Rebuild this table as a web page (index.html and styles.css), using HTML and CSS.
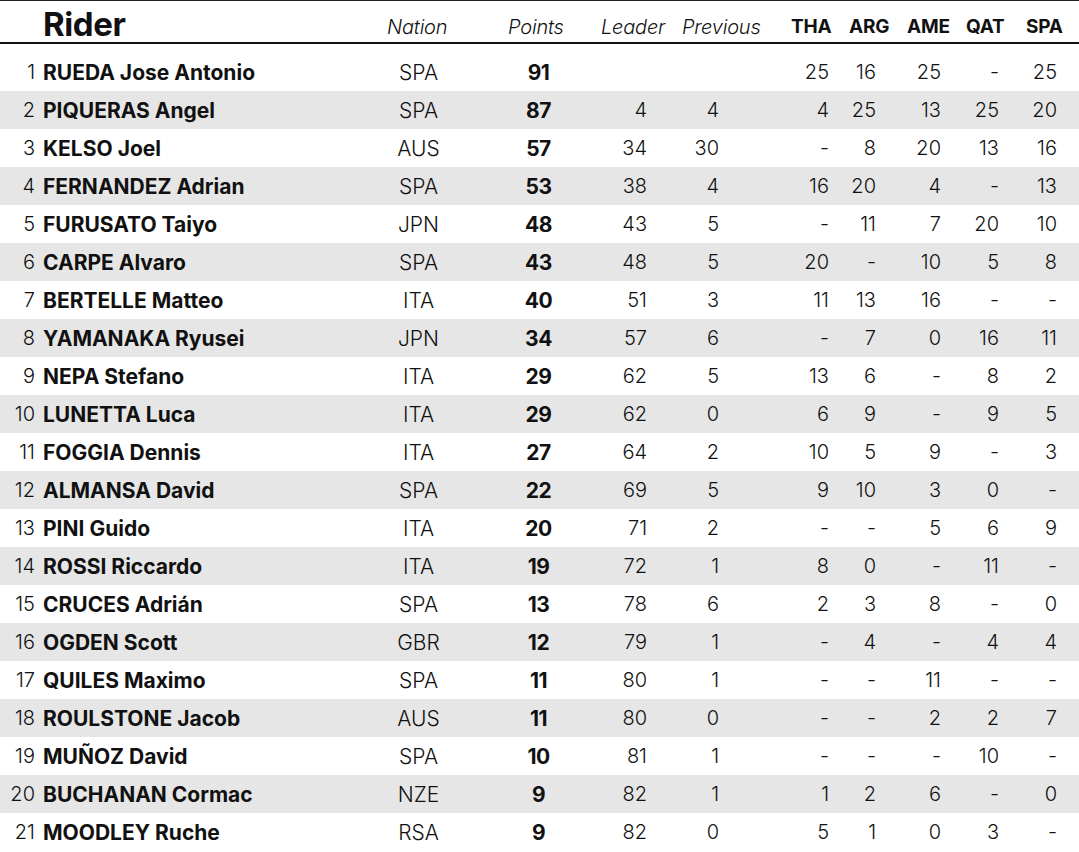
FILE: index.html
```html
<!DOCTYPE html>
<html>
<head>
<meta charset="utf-8">
<link rel="stylesheet" href="styles.css">
</head>
<body>
<div class="standings">
  <div class="head">
    <div class="h-rider">Rider</div>
    <div class="h-lab h-nation">Nation</div>
    <div class="h-lab h-points">Points</div>
    <div class="h-lab h-leader">Leader</div>
    <div class="h-lab h-prev">Previous</div>
    <div class="h-race h-tha">THA</div>
    <div class="h-race h-arg">ARG</div>
    <div class="h-race h-ame">AME</div>
    <div class="h-race h-qat">QAT</div>
    <div class="h-race h-spa">SPA</div>
  </div>
  <div class="spacer"></div>
  <div class="rows">
    <div class="row"><span class="pos">1</span><span class="name">RUEDA Jose Antonio</span><span class="nat">SPA</span><span class="pts">91</span><span class="num"></span><span class="num"></span><span class="num">25</span><span class="num">16</span><span class="num">25</span><span class="num">-</span><span class="num">25</span></div>
    <div class="row"><span class="pos">2</span><span class="name">PIQUERAS Angel</span><span class="nat">SPA</span><span class="pts">87</span><span class="num">4</span><span class="num">4</span><span class="num">4</span><span class="num">25</span><span class="num">13</span><span class="num">25</span><span class="num">20</span></div>
    <div class="row"><span class="pos">3</span><span class="name">KELSO Joel</span><span class="nat">AUS</span><span class="pts">57</span><span class="num">34</span><span class="num">30</span><span class="num">-</span><span class="num">8</span><span class="num">20</span><span class="num">13</span><span class="num">16</span></div>
    <div class="row"><span class="pos">4</span><span class="name">FERNANDEZ Adrian</span><span class="nat">SPA</span><span class="pts">53</span><span class="num">38</span><span class="num">4</span><span class="num">16</span><span class="num">20</span><span class="num">4</span><span class="num">-</span><span class="num">13</span></div>
    <div class="row"><span class="pos">5</span><span class="name">FURUSATO Taiyo</span><span class="nat">JPN</span><span class="pts">48</span><span class="num">43</span><span class="num">5</span><span class="num">-</span><span class="num">11</span><span class="num">7</span><span class="num">20</span><span class="num">10</span></div>
    <div class="row"><span class="pos">6</span><span class="name">CARPE Alvaro</span><span class="nat">SPA</span><span class="pts">43</span><span class="num">48</span><span class="num">5</span><span class="num">20</span><span class="num">-</span><span class="num">10</span><span class="num">5</span><span class="num">8</span></div>
    <div class="row"><span class="pos">7</span><span class="name">BERTELLE Matteo</span><span class="nat">ITA</span><span class="pts">40</span><span class="num">51</span><span class="num">3</span><span class="num">11</span><span class="num">13</span><span class="num">16</span><span class="num">-</span><span class="num">-</span></div>
    <div class="row"><span class="pos">8</span><span class="name">YAMANAKA Ryusei</span><span class="nat">JPN</span><span class="pts">34</span><span class="num">57</span><span class="num">6</span><span class="num">-</span><span class="num">7</span><span class="num">0</span><span class="num">16</span><span class="num">11</span></div>
    <div class="row"><span class="pos">9</span><span class="name">NEPA Stefano</span><span class="nat">ITA</span><span class="pts">29</span><span class="num">62</span><span class="num">5</span><span class="num">13</span><span class="num">6</span><span class="num">-</span><span class="num">8</span><span class="num">2</span></div>
    <div class="row"><span class="pos">10</span><span class="name">LUNETTA Luca</span><span class="nat">ITA</span><span class="pts">29</span><span class="num">62</span><span class="num">0</span><span class="num">6</span><span class="num">9</span><span class="num">-</span><span class="num">9</span><span class="num">5</span></div>
    <div class="row"><span class="pos">11</span><span class="name">FOGGIA Dennis</span><span class="nat">ITA</span><span class="pts">27</span><span class="num">64</span><span class="num">2</span><span class="num">10</span><span class="num">5</span><span class="num">9</span><span class="num">-</span><span class="num">3</span></div>
    <div class="row"><span class="pos">12</span><span class="name">ALMANSA David</span><span class="nat">SPA</span><span class="pts">22</span><span class="num">69</span><span class="num">5</span><span class="num">9</span><span class="num">10</span><span class="num">3</span><span class="num">0</span><span class="num">-</span></div>
    <div class="row"><span class="pos">13</span><span class="name">PINI Guido</span><span class="nat">ITA</span><span class="pts">20</span><span class="num">71</span><span class="num">2</span><span class="num">-</span><span class="num">-</span><span class="num">5</span><span class="num">6</span><span class="num">9</span></div>
    <div class="row"><span class="pos">14</span><span class="name">ROSSI Riccardo</span><span class="nat">ITA</span><span class="pts">19</span><span class="num">72</span><span class="num">1</span><span class="num">8</span><span class="num">0</span><span class="num">-</span><span class="num">11</span><span class="num">-</span></div>
    <div class="row"><span class="pos">15</span><span class="name">CRUCES Adrián</span><span class="nat">SPA</span><span class="pts">13</span><span class="num">78</span><span class="num">6</span><span class="num">2</span><span class="num">3</span><span class="num">8</span><span class="num">-</span><span class="num">0</span></div>
    <div class="row"><span class="pos">16</span><span class="name">OGDEN Scott</span><span class="nat">GBR</span><span class="pts">12</span><span class="num">79</span><span class="num">1</span><span class="num">-</span><span class="num">4</span><span class="num">-</span><span class="num">4</span><span class="num">4</span></div>
    <div class="row"><span class="pos">17</span><span class="name">QUILES Maximo</span><span class="nat">SPA</span><span class="pts">11</span><span class="num">80</span><span class="num">1</span><span class="num">-</span><span class="num">-</span><span class="num">11</span><span class="num">-</span><span class="num">-</span></div>
    <div class="row"><span class="pos">18</span><span class="name">ROULSTONE Jacob</span><span class="nat">AUS</span><span class="pts">11</span><span class="num">80</span><span class="num">0</span><span class="num">-</span><span class="num">-</span><span class="num">2</span><span class="num">2</span><span class="num">7</span></div>
    <div class="row"><span class="pos">19</span><span class="name">MUÑOZ David</span><span class="nat">SPA</span><span class="pts">10</span><span class="num">81</span><span class="num">1</span><span class="num">-</span><span class="num">-</span><span class="num">-</span><span class="num">10</span><span class="num">-</span></div>
    <div class="row"><span class="pos">20</span><span class="name">BUCHANAN Cormac</span><span class="nat">NZE</span><span class="pts">9</span><span class="num">82</span><span class="num">1</span><span class="num">1</span><span class="num">2</span><span class="num">6</span><span class="num">-</span><span class="num">0</span></div>
    <div class="row"><span class="pos">21</span><span class="name">MOODLEY Ruche</span><span class="nat">RSA</span><span class="pts">9</span><span class="num">82</span><span class="num">0</span><span class="num">5</span><span class="num">1</span><span class="num">0</span><span class="num">3</span><span class="num">-</span></div>
  </div>
</div>
</body>
</html>
```
FILE: styles.css
```css
* { box-sizing: border-box; }
html, body { margin: 0; padding: 0; background: #fff; }
body {
  font-family: "Inter", "Lato", "Liberation Sans", sans-serif;
  color: #111;
  width: 1079px;
  height: 852px;
  overflow: hidden;
}
.standings {
  border-top: 1px solid #222;
}
.head {
  display: grid;
  grid-template-columns: 387px 121px 93px 81px 109px 58px 58px 59px 60px 53px;
  height: 43px;
  align-items: end;
  padding-bottom: 3px;
  border-bottom: 2px solid #111;
  white-space: nowrap;
}
.h-rider {
  padding-left: 43px;
  font-size: 33px;
  font-weight: 700;
  letter-spacing: -0.4px;
  line-height: 36px;
  margin-bottom: -3px;
}
.h-lab {
  font-size: 20px;
  font-style: italic;
  font-weight: 300;
  line-height: 24px;
  letter-spacing: -0.2px;
}
.h-race {
  font-size: 19px;
  font-weight: 700;
  line-height: 24px;
  letter-spacing: -0.2px;
}
.spacer { height: 9px; }
.row {
  display: grid;
  grid-template-columns: 36px 338px 89px 151px 34px 72px 110px 47px 65px 58px 58px;
  height: 38px;
  align-items: center;
  font-size: 20px;
  white-space: nowrap;
}
.row:nth-child(even) { background: #e6e6e6; }
.pos {
  text-align: right;
  padding-right: 1px;
  font-weight: 300;
}
.name {
  padding-left: 7px;
  font-weight: 700;
  font-size: 21px;
  letter-spacing: 0;
}
.nat {
  text-align: center;
  font-weight: 300;
  font-size: 21px;
}
.pts {
  text-align: center;
  font-weight: 700;
  font-size: 21px;
  letter-spacing: -0.5px;
}
.num {
  text-align: right;
  font-weight: 300;
  padding-right: 1px;
}
```
